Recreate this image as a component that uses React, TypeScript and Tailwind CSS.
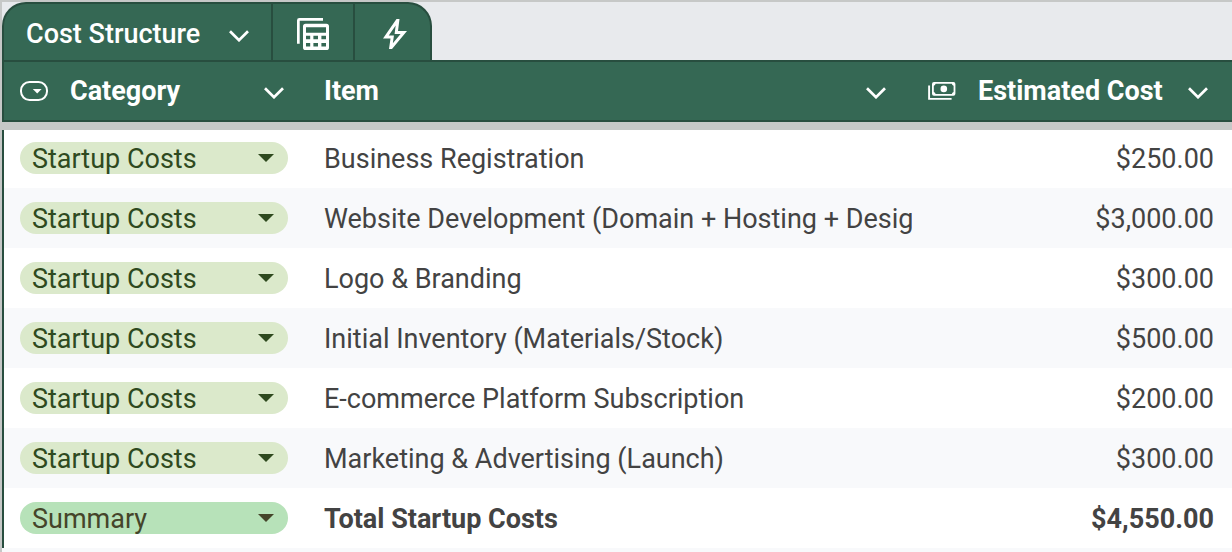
import { useState } from "react";
import type { ReactNode } from "react";

type Row = { category: string; item: string; cost: string };

const CATEGORIES = ["Startup Costs", "Summary"];

const ROWS: Row[] = [
  { category: "Startup Costs", item: "Business Registration", cost: "$250.00" },
  { category: "Startup Costs", item: "Website Development (Domain + Hosting + Design)", cost: "$3,000.00" },
  { category: "Startup Costs", item: "Logo & Branding", cost: "$300.00" },
  { category: "Startup Costs", item: "Initial Inventory (Materials/Stock)", cost: "$500.00" },
  { category: "Startup Costs", item: "E-commerce Platform Subscription", cost: "$200.00" },
  { category: "Startup Costs", item: "Marketing & Advertising (Launch)", cost: "$300.00" },
  { category: "Summary", item: "Total Startup Costs", cost: "$4,550.00" },
];

function Chevron() {
  return (
    <svg width="20" height="12" viewBox="0 0 20 12" fill="none" stroke="currentColor" strokeWidth="2.7" aria-hidden="true">
      <path d="M1 1.2 10 10.2 19 1.2" />
    </svg>
  );
}

function CalculatorIcon() {
  return (
    <svg width="32" height="32" viewBox="0 0 32 32" fill="currentColor" aria-hidden="true">
      <path d="M0 25.7V2.4Q0 0 2.4 0H26V2.7H2.7V25.7Z" />
      <path
        fillRule="evenodd"
        d="M8.6 5.7H29.4Q32 5.7 32 8.3V29.4Q32 32 29.4 32H8.6Q6 32 6 29.4V8.3Q6 5.7 8.6 5.7ZM9 9.2V14.7H29V9.2ZM9 17.8V21.2H13.2V17.8ZM16.4 17.8V21.2H21V17.8ZM24.4 17.8V21.2H29V17.8ZM9 25V28.6H13.2V25ZM16.4 25V28.6H21V25ZM24.4 25V28.6H29V25Z"
      />
    </svg>
  );
}

function BoltIcon() {
  return (
    <svg width="36" height="36" viewBox="0 -960 960 960" fill="currentColor" aria-hidden="true">
      <path d="m422-232 207-248H469l29-227-185 267h139l-30 208ZM320-80l40-280H160l360-520h80l-40 320h240L400-80h-80Z" />
    </svg>
  );
}

function DropdownChipIcon() {
  return (
    <svg width="28" height="20" viewBox="0 0 28 20" aria-hidden="true">
      <rect x="1" y="1" width="26" height="18" rx="8.5" fill="none" stroke="currentColor" strokeWidth="2" />
      <path d="M12.8 8H21.6L17.2 12.6Z" fill="currentColor" />
    </svg>
  );
}

function MoneyIcon() {
  return (
    <svg width="28" height="18" viewBox="0 0 28 18" aria-hidden="true">
      <path d="M1.1 3.4V16.9H23.6" fill="none" stroke="currentColor" strokeWidth="1.9" />
      <path
        fillRule="evenodd"
        fill="currentColor"
        d="M6 0H25.4Q27.4 0 27.4 2V11.8Q27.4 13.8 25.4 13.8H6Q4 13.8 4 11.8V2Q4 0 6 0ZM7.6 1.8Q7.3 3.4 5.8 3.7V10.1Q7.3 10.4 7.6 12H23.8Q24.1 10.4 25.6 10.1V3.7Q24.1 3.4 23.8 1.8Z"
      />
      <circle cx="15.8" cy="6.9" r="3.3" fill="currentColor" />
    </svg>
  );
}

function HeaderCell({ label, icon, className }: { label: string; icon?: ReactNode; className: string }) {
  return (
    <th scope="col" className="border-b-8 border-[#c6c8c7] p-0 text-left font-bold">
      <div className={`flex h-[62px] items-center border-y-2 border-[#284e3f] bg-[#356854] text-white ${className}`}>
        {icon}
        <span className="flex-1 whitespace-nowrap">{label}</span>
        <button type="button" aria-label={`${label} column menu`} className="pt-1">
          <Chevron />
        </button>
      </div>
    </th>
  );
}

function CategoryChip({ value, label }: { value: string; label: string }) {
  const [category, setCategory] = useState(value);
  const tone = category === "Summary" ? "bg-[#b7e2b9] text-[#45452a]" : "bg-[#dbe9cb] text-[#2f4a1f]";
  return (
    <div className={`grid h-8 items-center rounded-full ${tone}`}>
      <select
        aria-label={label}
        value={category}
        onChange={(event) => setCategory(event.target.value)}
        className="col-start-1 row-start-1 h-8 w-full appearance-none rounded-full bg-transparent pt-px pl-3"
      >
        {CATEGORIES.map((option) => (
          <option key={option}>{option}</option>
        ))}
      </select>
      <svg
        width="16"
        height="8"
        viewBox="0 0 16 8"
        fill="currentColor"
        aria-hidden="true"
        className="pointer-events-none col-start-1 row-start-1 mr-3.5 justify-self-end"
      >
        <path d="M0 0H16L8 8Z" />
      </svg>
    </div>
  );
}

export default function App() {
  return (
    <div className="flex min-h-screen flex-col border-t-2 border-l-2 border-[#c6c8c7] bg-[#e8eaed] font-[Roboto,sans-serif] text-[27px] leading-8 text-[#434343]">
      <div className="flex">
        <div className="flex h-[58px] divide-x-2 divide-[#284e3f] rounded-t-3xl border-x-2 border-t-2 border-[#284e3f] bg-[#356854] text-white">
          <button type="button" className="flex w-[269px] items-center justify-between px-[22px] pt-1 font-medium">
            Cost Structure
            <span className="pt-1">
              <Chevron />
            </span>
          </button>
          <button type="button" aria-label="Table views" className="flex w-[82px] items-center justify-center pt-1">
            <CalculatorIcon />
          </button>
          <button type="button" aria-label="Quick actions" className="flex w-[75px] items-center justify-center pt-1 pl-1">
            <BoltIcon />
          </button>
        </div>
      </div>
      <div className="flex-1 bg-[#f8f9fb]">
        <table className="w-full table-fixed border-separate border-spacing-0">
          <colgroup>
            <col className="w-[304px]" />
            <col />
            <col className="w-80" />
          </colgroup>
          <thead>
            <tr>
              <HeaderCell label="Category" icon={<DropdownChipIcon />} className="gap-[22px] border-l-2 pr-[22px] pl-4" />
              <HeaderCell label="Item" className="pr-[26px] pl-[18px]" />
              <HeaderCell label="Estimated Cost" icon={<MoneyIcon />} className="gap-[22px] pr-6 pl-4" />
            </tr>
          </thead>
          <tbody>
            {ROWS.map((row, index) => (
              <tr
                key={row.item}
                className="h-15 bg-white first:h-[58px] last:font-bold even:bg-[#f8f9fb] first:[&>td]:pb-0.5"
              >
                <td className="border-l-2 border-[#284e3f] py-0 pr-[18px] pl-4 font-normal">
                  <CategoryChip value={row.category} label={`Category for row ${index + 1}`} />
                </td>
                <td className="overflow-hidden pt-0.5 pr-0 pb-0 pl-[18px] whitespace-nowrap">{row.item}</td>
                <td className="pt-0.5 pr-[18px] pb-0 pl-0 text-right whitespace-nowrap">{row.cost}</td>
              </tr>
            ))}
          </tbody>
        </table>
      </div>
    </div>
  );
}
